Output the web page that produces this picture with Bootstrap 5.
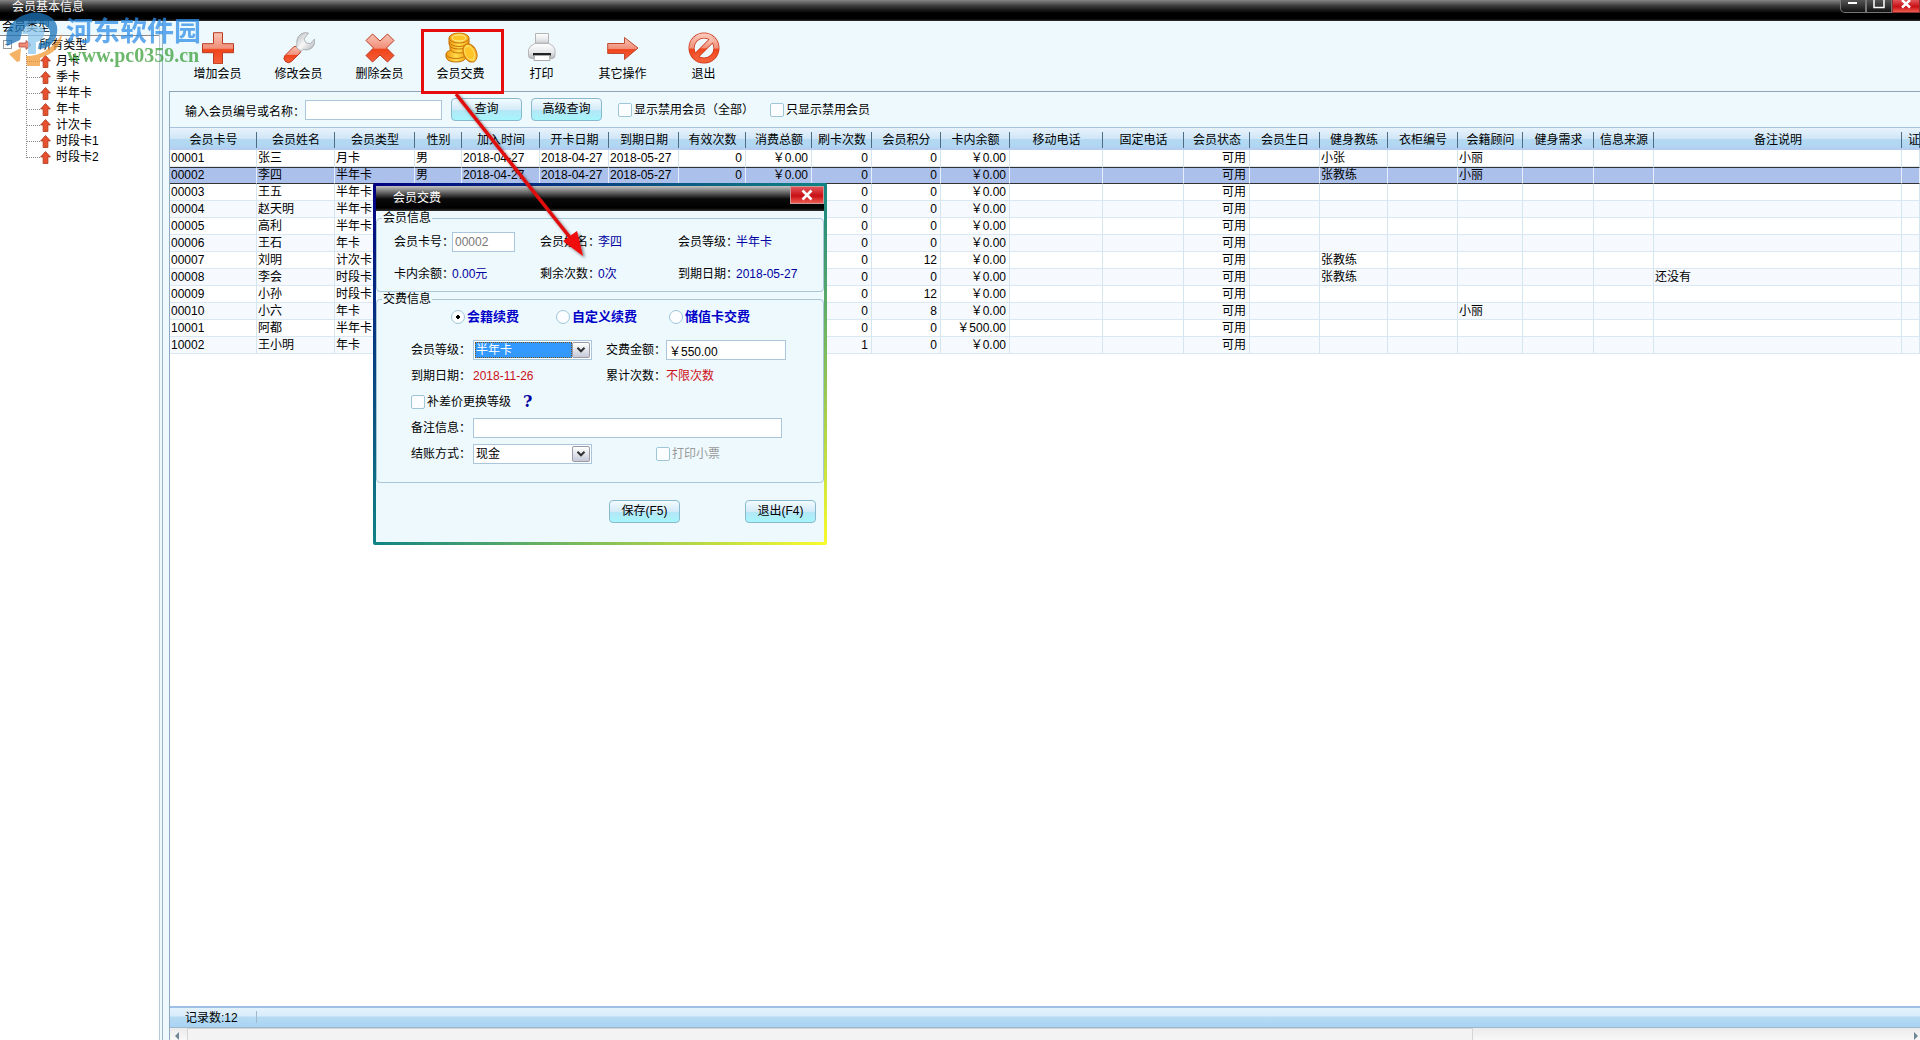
<!DOCTYPE html>
<html lang="zh-CN">
<head>
<meta charset="utf-8">
<meta name="viewport" content="width=device-width, initial-scale=1">
<title>会员基本信息</title>
<link href="https://cdn.jsdelivr.net/npm/bootstrap@5.3.0/dist/css/bootstrap.min.css" rel="stylesheet">
<style>
body{font:12px/16px "Liberation Sans","Noto Sans CJK SC",sans-serif;color:#000;background:#eef9fe}
.text-nowrap *{white-space:nowrap}
.workarea{min-height:0}
.titlebar{height:21px;background:linear-gradient(#858585,#3a3a3a 6px,#000 13px,#000 19px,#333);color:#f4f4f4}
.titlebar .cap{line-height:14px;padding-left:12px}
.winctl{height:13px}
.winctl button{width:26px;padding:0;border:1px solid #777;border-top:0;background:linear-gradient(#555,#111);color:#fff;line-height:0}
.winctl button:first-child{border-bottom-left-radius:5px}
.winctl .shut,.dlg .shut{background:linear-gradient(#e0555a,#c81014 55%,#ee5a50);border-color:#8c3030;width:28px}
.side{width:160px;border-right:1px solid #b9c9d6;background:#fff}
.side h2{font-size:12px;line-height:12px;font-weight:400;margin:0;height:15px;padding-left:2px;background:#eef9fe;border-bottom:1px solid #8b8b8b}
.tree,.tree ul{list-style:none;margin:0;padding:0}
.tree ul{margin-left:26px;border-left:1px dotted #888;height:105px;line-height:16px}
.tree li li{display:flex;align-items:center;height:16px}
.tree li li::before{content:"";width:13px;border-top:1px dotted #888}
.tree li li svg{margin-right:5px}
.tree .root{height:17px;padding-left:3px}
.tree .box{width:9px;height:9px;border:1px solid #999;line-height:6px;font-size:9px;text-align:center;margin-right:6px}
.main-col{border-left:1px solid #9db6c8;margin-left:2px;padding-left:6px;min-width:0}
.tools{height:70px;padding:10px 0 0 8px}
.tools button{width:81px;height:52px;border:0;background:none;padding:0;color:#000}
.tools svg{display:block;margin:0 auto 2px}
.panel{border-left:1px solid #8fa9c2;border-top:1px solid #8fa4ba;min-width:0;min-height:0}
.search{height:35px;padding-left:15px}
.search .tb{width:137px}
.tb{height:20px;border:1px solid #a9c6dd;background:#fff;padding:0 2px;border-radius:0;color:#000;min-width:0}
.btn-aqua{width:71px;height:23px;border:1px solid #8ab9ce;border-radius:4px;padding:0 0 2px;font-size:12px;line-height:16px;color:#000;background:linear-gradient(#f2fbff,#d3ebf8 50%,#b4e6f6 52%,#a6f6fc)}
.search .btn-aqua{margin-left:9px}
.ck{appearance:none;width:14px;height:14px;border:1px solid #9fc6d8;background:#fbfdff;border-radius:2px;margin:0 2px 0 0;flex:none}
.ck[type=radio]{border-radius:50%}
.ck[type=radio]:checked{background:radial-gradient(circle,#000 2px,#fbfdff 2px)}
.gridwrap{background:#fff;border-top:1px solid #a8c1dd;overflow:hidden;min-height:0}
.grid{table-layout:fixed;width:100%;border-collapse:separate;border-spacing:0}
.grid th{height:22px;font-weight:400;text-align:center;padding:2px 0 0;white-space:nowrap;overflow:hidden;background:linear-gradient(#4d6d84,#4d6d84) right 4px/1px 16px no-repeat,linear-gradient(#e8f3fc,#cfe5f7 50%,#b4daf2 52%,#b0d5f2 88%,#b5cdf0 89%)}
.grid th:last-child{text-align:left;padding-left:6px}
.grid td{height:17px;padding:0 2px 1px 1px;line-height:14px;border-right:1px solid #d6e6f0;border-bottom:1px solid #d9e8f2;white-space:nowrap;overflow:hidden}
.grid td.num{text-align:right;padding-right:3px}
.grid tr:nth-child(even) td{background:#f6faff}
.grid tr.sel td{background:#acc0ec;border-top:1px solid #333;border-bottom-color:#333;border-right-color:#e6eefb}
.statusbar{height:22px;border-top:2px solid #9fc0e6;border-bottom:1px solid #9fb6cc;background:linear-gradient(#e4f2fd,#d8ecfa 8px,#b6dbf3 9px,#a9d2f4)}
.statusbar span{width:87px;padding-left:15px;line-height:20px;background:linear-gradient(#9fb9cf,#9fb9cf) right 3px/1px 12px no-repeat}
.scroller{height:12px;background:linear-gradient(#ebebeb,#f8f8f8)}
.scroller .thumb{width:74.2%;background:#f3f3f3;border:1px solid #d5d5d5;border-bottom:0}
.scroller .end{width:17px;line-height:0;padding-top:4px}
.dlg{position:absolute;left:373px;top:183px;width:454px;padding:3px;background:linear-gradient(to bottom right,#000080,#108484 50%,#fbfb2c);border-radius:2px}
.dlg .bar{height:25px;background:linear-gradient(#c4c4c4,#6d6d6d 6px,#0a0a0a 13px,#000 22px,#333);color:#fff;padding-left:17px;line-height:24px}
.dlg .shut{width:34px;height:18px;padding:0;line-height:0;border:1px solid #c99}
.dlg .inside{background:#eef9fe}
.dlg fieldset{border:1px solid #aac6d9;border-radius:4px;margin:0}
.dlg legend{float:none;width:auto;font-size:12px;line-height:14px;padding:0 1px;margin:0 0 0 5px}
.dlg .info{display:grid;grid-template-columns:58px 88px 58px 80px 58px 1fr;grid-auto-rows:32px;align-items:center;padding:1px 0 1px 17px}
.info .tb{width:63px;color:#777;background:#fff}
.dlg .pay{display:grid;grid-template-columns:62px 133px 60px 120px;grid-auto-rows:20px;row-gap:6px;align-items:center;padding:13px 0 18px 34px}
.pay .wide{grid-column:1/-1}
.pay .memo{grid-column:2/-1;width:309px}
.pay .slip{grid-column:3/-1;padding-left:50px;color:#999}
.kinds{padding:1px 0 0 74px;height:21px}
.kinds label{width:105px;font-size:13px;font-weight:700;color:#0000c8;display:flex;align-items:center}
.kinds label+label{width:113px}
.val{color:#0000a0}
.due{color:#cc1020}
.combo{width:119px;height:20px;border:1px solid #a9c6dd;background:#fff;padding:1px}
.combo select{appearance:none;border:1px solid #fff;background:#fff;flex:1;padding:0;min-width:0;outline:0;line-height:14px;color:#000}
.combo select.picked{background:#3399ff;color:#fff;border:1px dotted #7a5520}
.combo svg{border:1px solid #9a9aa8;border-radius:2px;background:linear-gradient(#fff,#c6cad8)}
.help{font:bold 16px/16px "DejaVu Serif",serif;color:#0000a0;margin-left:12px}
.actions{padding:17px 8px 19px;gap:65px}
.annot{position:absolute;left:0;top:0;pointer-events:none}
.wm{position:absolute;left:4px;top:12px;opacity:.75;pointer-events:none}
.wm b{display:block;font:bold 27px/28px "Noto Sans CJK SC",sans-serif;color:#2f8fe8}
.wm i{display:block;font:bold 20px/22px "Liberation Serif",serif;color:#3ba03b;padding-left:1px}
</style>
<script src="https://cdn.jsdelivr.net/npm/bootstrap@5.3.0/dist/js/bootstrap.bundle.min.js"></script>
</head>
<body class="text-nowrap">
<svg width="0" height="0" class="position-absolute">
<defs>
<linearGradient id="red" x1="0" y1="0" x2="0" y2="1"><stop offset="0" stop-color="#fbc4b4"/><stop offset=".5" stop-color="#f0907a"/><stop offset=".55" stop-color="#f0441a"/><stop offset="1" stop-color="#f4603a"/></linearGradient>
<linearGradient id="steel" x1="0" y1="0" x2="1" y2="1"><stop offset="0" stop-color="#b0b4b8"/><stop offset=".5" stop-color="#f8f8f8"/><stop offset="1" stop-color="#a4a8ac"/></linearGradient>
<linearGradient id="silver" x1="0" y1="0" x2="0" y2="1"><stop offset="0" stop-color="#fff"/><stop offset=".6" stop-color="#e4e6e8"/><stop offset="1" stop-color="#b4b6ba"/></linearGradient>
<linearGradient id="gold" x1="0" y1="0" x2="1" y2="0"><stop offset="0" stop-color="#f09a14"/><stop offset=".5" stop-color="#ffdc4a"/><stop offset="1" stop-color="#f6a81c"/></linearGradient>
<symbol id="up" viewBox="0 0 10 12"><path d="M5 .5 9.500 5.500H7.200V11.500H2.800V5.500H.5z" fill="#e8502e" stroke="#b03c24" stroke-width=".8"/></symbol>
</defs>
</svg>
<div class="d-flex flex-column vh-100 overflow-hidden">
<header class="titlebar d-flex align-items-start justify-content-between">
<span class="cap">会员基本信息</span>
<div class="winctl d-flex">
<button aria-label="最小化"><svg width="10" height="12"><path d="M0 3h9" stroke="#fff" stroke-width="2"/></svg></button>
<button aria-label="最大化"><svg width="12" height="12"><path d="M1 0V7.500H11V0" fill="none" stroke="#fff" stroke-width="1.500"/></svg></button>
<button class="shut" aria-label="关闭"><svg width="12" height="12"><path d="M2 0 10 7.500M10 0 2 7.500" stroke="#fff" stroke-width="2.400"/></svg></button>
</div>
</header>
<div class="workarea d-flex flex-grow-1">
<aside class="side flex-shrink-0">
<h2>会员类型</h2>
<ul class="tree">
<li><div class="root d-flex align-items-center"><span class="box">−</span><svg width="14" height="10" class="me-1"><path d="M1 3H8V.500L13 5 8 9.500V7H1z" fill="#f08a76" stroke="#b04a3c" stroke-width=".8"/></svg>&nbsp;所有类型</div>
<ul id="kinds"></ul></li>
</ul>
</aside>
<main class="main-col d-flex flex-column flex-grow-1">
<nav class="tools d-flex flex-shrink-0">
<button><svg width="32" height="32"><path d="M11.500 .700h9v11h11v9h-11v11h-9v-11h-11v-9h11z" fill="url(#red)" stroke="#b83a20"/></svg>增加会员</button>
<button><svg width="32" height="32"><path d="M2 23.500 10.500 15q1.500-1.500 3.500 0l3 3q1.500 1.500 0 3L8.500 29.500q-3 2.500-6 0Q-.5 26.500 2 23.500z" fill="url(#red)" stroke="#c03a20"/><path d="M14 14Q12.500 6 18 2q3.500-2.200 7.500-1l-4.500 6 2 4 4.500.5 4-4.500q1 6.500-3.500 9.500-4 2.500-8 1l-2 2-5-4.500z" fill="url(#steel)" stroke="#a0a4a8" stroke-width=".8"/></svg>修改会员</button>
<button><svg width="32" height="32"><path d="M8.500 2 16 9l7.500-7 6.500 6.500q-4 4-7.500 7.500L30 23.500 23.500 30 16 23 8.500 30 2 23.500 9.500 16Q6 12.500 2 8.500z" fill="url(#red)" stroke="#b83a20"/></svg>删除会员</button>
<button><svg width="34" height="32" stroke="#c87408" fill="url(#gold)"><path d="M2 22v3q1 5 10 5t10-5v-3z"/><ellipse cx="12" cy="22" rx="10" ry="4.500"/><path d="M6 12v5q1 4 9 4t9-4v-5z"/><path d="M5 6v6q1 5 10 5t10-5V6z"/><path d="M5 9.500q2 5 10 5t10-5" fill="none"/><ellipse cx="15" cy="6" rx="10" ry="5"/><ellipse cx="15" cy="6" rx="7" ry="3" fill="#ffc428" stroke="#ffe88a"/><ellipse cx="26" cy="21" rx="6.500" ry="9.500" transform="rotate(-24 26 21)"/><ellipse cx="25.500" cy="21" rx="4.500" ry="7" transform="rotate(-24 25.500 21)" fill="#ffc428" stroke="#ffe06a"/></svg>会员交费</button>
<button><svg width="32" height="32"><path d="M9.500 1.500h13v11h-13z" fill="url(#silver)" stroke="#b4b4b4"/><path d="M9 11.500h14q5 2 6 6v6q0 3-3 3h-2V22H8v4.500H5.500q-3 0-3-3v-6q1-4 6.500-6z" fill="url(#silver)" stroke="#aaa" stroke-width=".8"/><path d="M7 21h18v2.500H7z" fill="#222"/><path d="M8.500 23.500h15l.5 5H8z" fill="#fff" stroke="#aaa"/></svg>打印</button>
<button><svg width="32" height="32"><path d="M.7 11.500H17.500V5.500L31 16 17.500 27.500v-6H.7z" fill="url(#red)" stroke="#c04a30"/></svg>其它操作</button>
<button><svg width="32" height="32"><circle cx="16" cy="16" r="12.500" fill="none" stroke="#c8381c" stroke-width="6"/><path d="M7.500 24.500 24.500 7.500" stroke="#c8381c" stroke-width="6"/><circle cx="16" cy="16" r="12.500" fill="none" stroke="url(#red)" stroke-width="4.500"/><path d="M7.500 24.500 24.500 7.500" stroke="url(#red)" stroke-width="4.500"/></svg>退出</button>
</nav>
<section class="panel d-flex flex-column flex-grow-1">
<form class="search d-flex align-items-center flex-shrink-0">
<label for="q" class="pt-1">输入会员编号或名称：</label>
<input id="q" class="tb">
<div class="d-flex align-items-center">
<button type="button" class="btn-aqua">查询</button>
<button type="button" class="btn-aqua me-3">高级查询</button>
<label class="d-flex align-items-center me-3"><input type="checkbox" class="ck">显示禁用会员（全部）</label>
<label class="d-flex align-items-center"><input type="checkbox" class="ck">只显示禁用会员</label>
</div>
</form>
<div class="gridwrap flex-grow-1">
<table class="grid"><colgroup id="cols"></colgroup><thead><tr id="heads"></tr></thead><tbody id="rows"></tbody></table>
</div>
<footer class="statusbar d-flex flex-shrink-0"><span>记录数:12</span></footer>
<div class="scroller d-flex flex-shrink-0 justify-content-between">
<div class="d-flex flex-grow-1"><span class="end ps-1"><svg width="8" height="8"><path d="M5 0V8L1 4z" fill="#6f8796"/></svg></span><span class="thumb"></span></div>
<span class="end text-end"><svg width="7" height="8"><path d="M1 0V8L5 4z" fill="#6f8796"/></svg></span>
</div>
</section>
</main>
</div>
</div>

<section class="dlg" role="dialog" aria-label="会员交费">
<div class="bar d-flex justify-content-between align-items-start"><span>会员交费</span><button class="shut" aria-label="关闭"><svg width="12" height="12"><path d="M1.500 1.500 10.500 10.500M10.500 1.500 1.500 10.500" stroke="#fff" stroke-width="2.600"/></svg></button></div>
<div class="inside">
<fieldset>
<legend>会员信息</legend>
<div class="info">
<label for="card">会员卡号：</label><input id="card" class="tb" value="00002" disabled>
<span>会员姓名：</span><span class="val">李四</span>
<span>会员等级：</span><span class="val">半年卡</span>
<span>卡内余额：</span><span class="val">0.00元</span>
<span>剩余次数：</span><span class="val">0次</span>
<span>到期日期：</span><span class="val">2018-05-27</span>
</div>
</fieldset>
<fieldset>
<legend>交费信息</legend>
<div class="kinds d-flex">
<label><input type="radio" name="k" class="ck" checked>会籍续费</label>
<label><input type="radio" name="k" class="ck">自定义续费</label>
<label><input type="radio" name="k" class="ck">储值卡交费</label>
</div>
<div class="pay">
<label for="lv">会员等级：</label>
<div class="combo d-flex"><select id="lv" class="picked"><option>半年卡</option></select><svg width="18" height="16" viewBox="0 0 18 16"><path d="M5 5.500 9 9.500 13 5.500" fill="none" stroke="#333" stroke-width="2.400"/></svg></div>
<label for="amt">交费金额：</label><input id="amt" class="tb" value="￥550.00">
<span>到期日期：</span><span class="due">2018-11-26</span><span>累计次数：</span><span class="due">不限次数</span>
<div class="wide d-flex align-items-center"><label class="d-flex align-items-center"><input type="checkbox" class="ck">补差价更换等级</label><span class="help">?</span></div>
<label for="memo">备注信息：</label><input id="memo" class="tb memo">
<label for="how">结账方式：</label>
<div class="combo d-flex"><select id="how"><option>现金</option></select><svg width="18" height="16" viewBox="0 0 18 16"><path d="M5 5.500 9 9.500 13 5.500" fill="none" stroke="#333" stroke-width="2.400"/></svg></div>
<label class="slip d-flex align-items-center"><input type="checkbox" class="ck" disabled>打印小票</label>
</div>
</fieldset>
<div class="actions d-flex justify-content-end"><button class="btn-aqua">保存(F5)</button><button class="btn-aqua">退出(F4)</button></div>
</div>
</section>

<svg class="annot" width="620" height="270">
<defs><filter id="sh" x="-10%" y="-10%" width="130%" height="130%"><feDropShadow dx="2" dy="2" stdDeviation="1.500" flood-color="#000" flood-opacity=".5"/></filter></defs>
<path d="M422.500 30.500H502.500V92.500H422.500z" fill="none" stroke="#e60d0d" stroke-width="3"/>
<g filter="url(#sh)"><path d="M456 94 572 240" stroke="#e01010" stroke-width="3.500"/><path d="M583 256 563 241 577 231z" fill="#f00808"/></g>
</svg>
<div class="wm d-flex">
<svg width="62" height="56" viewBox="0 0 62 56"><path d="M3 34Q-1 16 14 6 32-5 48 6q8 7 4 19-5 12-18 12l1-6q9 0 11-8 1-9-9-11Q24 9 18 20q-1 4-2 8z" fill="#1c74b8"/><path d="M22 14h10q10 0 8 9-2 7-8 7v12h-8V22h-6z" fill="#8cc8ee"/><path d="M5 42 17 36l-1 13-3 1zM22 44Q44 44 58 22q-1 18-22 24v8H23z" fill="#f29a36"/></svg>
<div class="pt-1"><b>河东软件园</b><i>www.pc0359.cn</i></div>
</div>
<script>
document.getElementById('kinds').innerHTML = ['月卡','季卡','半年卡','年卡','计次卡','时段卡1','时段卡2']
  .map(t => `<li><svg width="11" height="13"><use href="#up"/></svg>${t}</li>`).join('');
const cols = [['会员卡号',87],['会员姓名',78],['会员类型',80],['性别',47],['加入时间',78],['开卡日期',69],['到期日期',70],['有效次数',67],['消费总额',66],['刷卡次数',60],['会员积分',69],['卡内余额',69],['移动电话',93],['固定电话',81],['会员状态',66],['会员生日',70],['健身教练',68],['衣柜编号',70],['会籍顾问',65],['健身需求',71],['信息来源',60],['备注说明',248],['证',0]];
document.getElementById('cols').innerHTML = cols.map(c => `<col${c[1] ? ` style="width:${c[1]}px"` : ''}>`).join('');
document.getElementById('heads').innerHTML = cols.map(c => `<th>${c[0]}</th>`).join('');
const D = '2018-04-27', E = '2018-05-27';
// id, name, type, points, balance, swipes, coach, adviser, remark
const people = [
  ['00001','张三','月卡',0,'0.00',0,'小张','小丽',''],['00002','李四','半年卡',0,'0.00',0,'张教练','小丽',''],
  ['00003','王五','半年卡',0,'0.00',0,'','',''],['00004','赵天明','半年卡',0,'0.00',0,'','',''],
  ['00005','高利','半年卡',0,'0.00',0,'','',''],['00006','王石','年卡',0,'0.00',0,'','',''],
  ['00007','刘明','计次卡',12,'0.00',0,'张教练','',''],['00008','李会','时段卡',0,'0.00',0,'张教练','','还没有'],
  ['00009','小孙','时段卡',12,'0.00',0,'','',''],['00010','小六','年卡',8,'0.00',0,'','小丽',''],
  ['10001','阿都','半年卡',0,'500.00',0,'','',''],['10002','王小明','年卡',0,'0.00',1,'','','']];
const right = [7,8,9,10,11,14];
document.getElementById('rows').innerHTML = people.map((p, i) => {
  const top = i < 2;
  const v = [p[0],p[1],p[2],top?'男':'',top?D:'',top?D:'',top?E:'',top?0:'',top?'￥0.00':'',p[5],p[3],'￥'+p[4],'','','可用','',p[6],'',p[7],'','',p[8],''];
  return `<tr${i === 1 ? ' class="sel"' : ''}>` + v.map((x, j) => `<td${right.includes(j) ? ' class="num"' : ''}>${x}</td>`).join('') + '</tr>';
}).join('');
</script>
</body>
</html>
